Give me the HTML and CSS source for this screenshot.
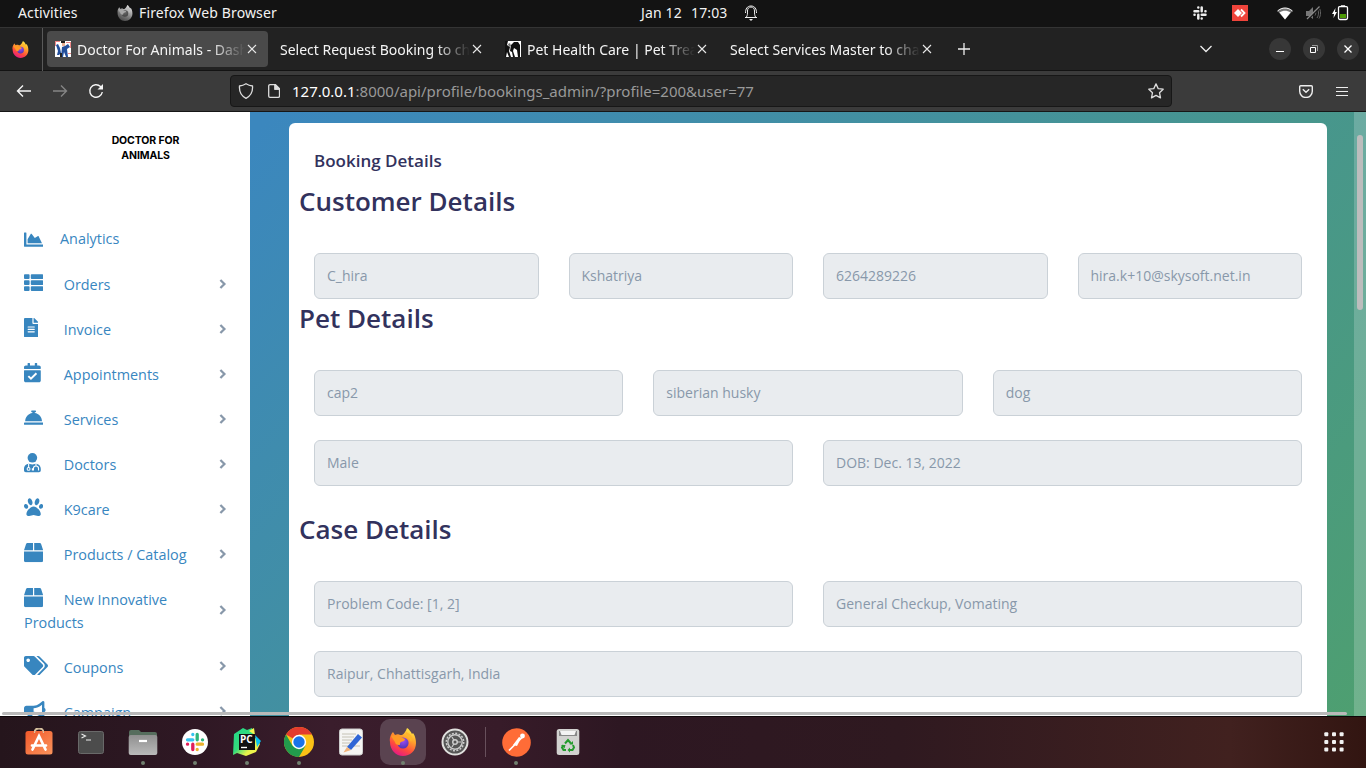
FILE: index.html
```html
<!DOCTYPE html>
<html lang="en">
<head>
<meta charset="utf-8">
<title>Doctor For Animals - Dashboard</title>
<link rel="stylesheet" href="styles.css">
</head>
<body>
<svg class="defs" aria-hidden="true">
  <defs>
    <linearGradient id="flame" x1=".8" y1="0" x2=".3" y2="1"><stop offset="0" stop-color="#fff04a"/><stop offset=".35" stop-color="#ffa52b"/><stop offset=".7" stop-color="#ff4a3d"/><stop offset="1" stop-color="#e3158a"/></linearGradient>
    <radialGradient id="globe" cx=".5" cy=".3" r=".7"><stop offset="0" stop-color="#a04bf5"/><stop offset="1" stop-color="#4b36b5"/></radialGradient>
    <linearGradient id="orange" x1="0" y1="0" x2="1" y2="1"><stop offset="0" stop-color="#f1582a"/><stop offset="1" stop-color="#fa945c"/></linearGradient>
    <linearGradient id="grey" x1="0" y1="0" x2="0" y2="1"><stop offset="0" stop-color="#8f8f8f"/><stop offset="1" stop-color="#bababa"/></linearGradient>
    <linearGradient id="pc" x1="0" y1="0" x2="1" y2="1"><stop offset="0" stop-color="#21d789"/><stop offset=".45" stop-color="#35dc7c"/><stop offset=".7" stop-color="#e7f24b"/><stop offset="1" stop-color="#fcf84a"/></linearGradient>
    <symbol id="firefox" viewBox="0 0 28 28">
      <path fill="url(#flame)" d="M1 14C0 9 3 5 4 4l2 3c2-1 4-1 5 0l2 0c2-1 4-4 5-7 2 1 4 4 5 6l1-1c3 4 3 9 3 10 0 8-6 13-13 13S1 22 1 14z"/>
      <circle cx="14" cy="15" r="5.6" fill="url(#globe)"/>
      <path fill="#ff9a25" d="M2 8c4-2 9 1 14 3 0 2-2 2-4 3-2 1 0 3-2 3s-4-1-4-3z"/>
      <path fill="#ffb52b" d="M17 4c-1 4 4 6 5 10 2-3 1-8-5-10z"/>
    </symbol>
    <symbol id="close" viewBox="0 0 10 10"><path d="M1 1l8 8M9 1L1 9" fill="none" stroke="#e8e8e8" stroke-width="1.1"/></symbol>
    <symbol id="chev" viewBox="0 0 8 12"><path d="M1.4 2l4 4-4 4" fill="none" stroke="#8898aa" stroke-width="2.3"/></symbol>
    <symbol id="box" viewBox="0 0 512 512"><path d="M509.5 184.6L458.9 32.8C452.4 13.2 434.1 0 413.4 0H272v192h238.7c-.4-2.5-.4-5-1.2-7.4zM240 0H98.6c-20.7 0-39 13.2-45.5 32.8L2.5 184.6c-.8 2.4-.8 4.9-1.2 7.4H240V0zM0 224v240c0 26.5 21.5 48 48 48h416c26.5 0 48-21.5 48-48V224H0z"/></symbol>
  </defs>
</svg>

<header class="topbar">
  <span class="activities">Activities</span>
  <svg class="app-ff" width="16" height="16"><use href="#firefox"/></svg>
  <span class="app-name">Firefox Web Browser</span>
  <span class="date">Jan 12</span><span class="time">17:03</span>
  <svg class="bell" width="14" height="16" viewBox="0 0 14 16" fill="none" stroke="#eee"><path d="M1 12.5h12M2.5 12c1-2 1-3 1-6 0-2.5 1.200-4 3.500-4s3.500 1.500 3.500 4c0 3 0 4 1 6M1.500 8c0-4 1.500-7 5.500-7s5.500 3 5.500 7"/><path d="M5 14h4l-2 2z" fill="#eee" stroke="none"/></svg>
  <span class="tray">
    <svg width="14" height="14" viewBox="0 0 14 14" stroke="#eee" stroke-width="2.500" stroke-linecap="round"><path d="M5.300 1.500v.1M1.500 5.300h3.800M8.700 1.500v3.800M12.500 5.300h-.1M8.700 8.700h3.800M8.700 12.500v-.1M5.300 8.700v3.800M1.500 8.700h.1"/></svg>
    <svg class="anydesk" width="16" height="16" viewBox="0 0 16 16"><path fill="#ef443b" d="M0 0h16v16H0z"/><path fill="#fff" d="M2 8l4-4 4 4-4 4z"/><path d="M9 4.500L12.500 8 9 11.500" fill="none" stroke="#fff" stroke-width="1.800"/></svg>
    <svg class="wifi" width="16" height="13" viewBox="0 0 16 13"><path d="M.5 4C5 0 11 0 15.500 4L8 12.500z" fill="#777"/><path d="M.5 4C5 0 11 0 15.500 4" fill="none" stroke="#fff"/><path d="M2.500 5.500C6 3 10 3 13.500 5.500L8 12.500z" fill="#fff"/></svg>
    <svg class="mute" width="15" height="14" viewBox="0 0 15 14"><path fill="#777" d="M0 5h3l4-4v12L3 10H0z"/><path d="M9 4.500c1 1 1 4 0 5M11 3c2 2 2 6 0 9M13 1.500c2 3 2 8 0 11" fill="none" stroke="#666"/><path d="M1.500 14L14 1.500" stroke="#131313" stroke-width="1.500"/><path d="M1 13L13.500.5" stroke="#888" stroke-width="1.300"/></svg>
    <svg width="17" height="16" viewBox="0 0 17 16"><path fill="#fff" d="M3.500 3L0 9h2l-.5 4L5 7H3z"/><path fill="#4e9a06" d="M8 9h6v4H8z"/><path d="M9.500 1.700V1h3v.7M7.500 1.700h7a1 1 0 0 1 1 1V13a1.500 1.500 0 0 1-1.500 1.500H8A1.500 1.500 0 0 1 6.500 13V2.700a1 1 0 0 1 1-1z" fill="none" stroke="#fff" stroke-width="1.300"/></svg>
  </span>
</header>

<div class="tabs">
  <div class="pinned"><svg width="17" height="17"><use href="#firefox"/></svg></div>
  <div class="tab active">
    <svg class="fav" width="16" height="16" viewBox="0 0 16 16"><path fill="#fff" d="M0 0h16v16H0z"/><path fill="#e88" d="M0 0h5v1H1v4H0zM11 1h5v6h-1V2h-4zM13 12h3v1h-3z"/><path fill="#234f9b" d="M1 4l2-1 2 4 1 5-2 2H2l1-4zM7 6l3-1 3-2 2 3-3 2 1 8h-2l-2-5-1 5H6z"/><path fill="#222" d="M6 0h4v2H6zM5 12h2v4H5z"/><path fill="#e9b195" d="M7 2h3v3H7z"/></svg>
    <span class="label">Doctor For Animals - Dashboard</span><svg class="x" width="10" height="10"><use href="#close"/></svg>
  </div>
  <div class="tab"><span class="label">Select Request Booking to change</span><svg class="x" width="10" height="10"><use href="#close"/></svg></div>
  <div class="tab">
    <svg class="fav" width="16" height="16" viewBox="0 0 16 16"><path fill="#fff" d="M0 0h16v16H0z"/><path fill="#111" d="M0 0h3l-1 4 3 2-1 4 2 6H4L2 11l-1 5H0zM6 4l3-3 4 0 2 3 0 12h-2l-1-7-3-2-1 3 2 6H8l-1-5-2-1z"/><path fill="#777" d="M3 3l2-1 1 3-2 1z"/></svg>
    <span class="label">Pet Health Care | Pet Treatment</span><svg class="x" width="10" height="10"><use href="#close"/></svg>
  </div>
  <div class="tab"><span class="label">Select Services Master to change</span><svg class="x" width="10" height="10"><use href="#close"/></svg></div>
  <svg class="plus" width="12" height="12" viewBox="0 0 12 12"><path d="M6 0v12M0 6h12" stroke="#eee" stroke-width="1.300"/></svg>
  <svg class="down" width="12" height="8" viewBox="0 0 12 8"><path d="M.5 1L6 6.500 11.500 1" fill="none" stroke="#eee" stroke-width="1.300"/></svg>
  <span class="win"><svg width="10" height="10" viewBox="0 0 10 10"><path d="M1 7.500h8" stroke="#fff"/></svg></span>
  <span class="win"><svg width="10" height="10" viewBox="0 0 10 10" fill="none"><path d="M1.500 3.500h5v5h-5z" stroke="#fff"/><path d="M3 1.500h5.500V7" stroke="#999"/></svg></span>
  <span class="win"><svg width="10" height="10" viewBox="0 0 10 10"><path d="M1.500 1.500l7 7M8.500 1.500l-7 7" stroke="#fff" stroke-width="1.300"/></svg></span>
</div>

<div class="toolbar">
  <svg width="16" height="14" viewBox="0 0 16 14" fill="none" stroke="#f4f4f4" stroke-width="1.400"><path d="M15 7H1.500M7 1.500L1.500 7 7 12.500"/></svg>
  <svg class="fwd" width="16" height="14" viewBox="0 0 16 14" fill="none" stroke="#858585" stroke-width="1.400"><path d="M1 7h13.500M9 1.500L14.500 7 9 12.500"/></svg>
  <svg class="reload" width="16" height="16" viewBox="0 0 16 16" fill="none"><path d="M14.300 9A6.300 6.300 0 1 1 12.500 3.500l1.500 1.500" stroke="#f4f4f4" stroke-width="1.400"/><path d="M15 1v5.500H9.500z" fill="#f4f4f4"/></svg>
  <div class="url">
    <svg width="16" height="16" viewBox="0 0 16 16" fill="none" stroke="#ddd" stroke-width="1.300"><path d="M8 .8c2 1.300 4 2 6.500 2.200C15 9 12.500 13 8 15.300 3.500 13 1 9 1.500 3 4 2.800 6 2.100 8 .8z"/></svg>
    <svg class="page-i" width="12" height="14" viewBox="0 0 12 14" fill="none" stroke="#ddd" stroke-width="1.300"><path d="M2 .7h5.500l4 4V12a1.300 1.300 0 0 1-1.300 1.300H2A1.300 1.300 0 0 1 .7 12V2A1.300 1.300 0 0 1 2 .7z"/><path d="M7 1v4.200h4.500" /><path d="M7 1v4h4z" fill="#ddd"/></svg>
    <span class="address"><b>127.0.0.1</b>:8000/api/profile/bookings_admin/?profile=200&amp;user=77</span>
    <svg class="star" width="16" height="16" viewBox="0 0 16 16" fill="none" stroke="#ddd" stroke-width="1.300" stroke-linejoin="round"><path d="M8 .9l2.200 4.700 5 .6-3.700 3.500 1 5.200L8 12.400 3.500 14.900l1-5.200L.8 6.200l5-.6z"/></svg>
  </div>
  <svg class="pocket" width="14" height="13" viewBox="0 0 14 13" fill="none" stroke="#eee" stroke-width="1.400"><path d="M1.700.7h10.600a1 1 0 0 1 1 1v4.500a6.300 6.300 0 0 1-12.600 0V1.700a1 1 0 0 1 1-1z"/><path d="M3.800 4.300L7 7.300l3.200-3"/></svg>
  <svg class="menu" width="12" height="11" viewBox="0 0 12 11" stroke="#eee"><path d="M0 1.500h12M0 5.500h12M0 9.500h12" stroke-width="1.100"/></svg>
</div>

<div class="page">
  <aside class="sidebar">
    <div class="brand">DOCTOR FOR<br>ANIMALS</div>
    <nav>
      <a class="item first"><span class="ico"><svg viewBox="0 0 512 512"><path d="M500 384c6.600 0 12 5.400 12 12v40c0 6.600-5.400 12-12 12H12c-6.600 0-12-5.400-12-12V76c0-6.600 5.400-12 12-12h40c6.600 0 12 5.400 12 12v308h436zM372.700 159.500L288 216l-85.300-113.700c-5.100-6.800-15.500-6.300-19.900 1L96 248v104h384l-89.900-187.800c-3.200-6.500-11.400-8.700-17.400-4.700z"/></svg></span>Analytics</a>
      <a class="item"><span class="txt"><span class="ico"><svg viewBox="0 0 512 512"><rect y="32" width="149" height="128" rx="24"/><rect x="181" y="32" width="331" height="128" rx="24"/><rect y="192" width="149" height="128" rx="24"/><rect x="181" y="192" width="331" height="128" rx="24"/><rect y="352" width="149" height="128" rx="24"/><rect x="181" y="352" width="331" height="128" rx="24"/></svg></span> Orders</span><svg class="chev"><use href="#chev"/></svg></a>
      <a class="item"><span class="txt"><span class="ico"><svg viewBox="0 0 384 512"><path d="M224 136V0H24C10.700 0 0 10.700 0 24v464c0 13.300 10.700 24 24 24h336c13.300 0 24-10.700 24-24V160H248c-13.200 0-24-10.800-24-24zm64 236c0 6.600-5.400 12-12 12H108c-6.600 0-12-5.400-12-12v-8c0-6.600 5.400-12 12-12h168c6.600 0 12 5.400 12 12v8zm0-64c0 6.600-5.400 12-12 12H108c-6.600 0-12-5.400-12-12v-8c0-6.600 5.400-12 12-12h168c6.600 0 12 5.400 12 12v8zm0-72v8c0 6.600-5.400 12-12 12H108c-6.600 0-12-5.400-12-12v-8c0-6.600 5.400-12 12-12h168c6.600 0 12 5.400 12 12zm96-114.100v6.100H256V0h6.100c6.400 0 12.500 2.500 17 7l97.900 98c4.500 4.500 7 10.600 7 16.900z"/></svg></span> Invoice</span><svg class="chev"><use href="#chev"/></svg></a>
      <a class="item"><span class="txt"><span class="ico"><svg viewBox="0 0 448 512"><path d="M436 160H12c-6.627 0-12-5.373-12-12v-36c0-26.510 21.490-48 48-48h48V12c0-6.627 5.373-12 12-12h40c6.627 0 12 5.373 12 12v52h128V12c0-6.627 5.373-12 12-12h40c6.627 0 12 5.373 12 12v52h48c26.510 0 48 21.490 48 48v36c0 6.627-5.373 12-12 12zM12 192h424c6.627 0 12 5.373 12 12v260c0 26.510-21.490 48-48 48H48c-26.510 0-48-21.490-48-48V204c0-6.627 5.373-12 12-12z"/><path d="M116 350l70 70 146-146" fill="none" stroke="#fff" stroke-width="52"/></svg></span> Appointments</span><svg class="chev"><use href="#chev"/></svg></a>
      <a class="item"><span class="txt"><span class="ico"><svg viewBox="0 0 512 512"><path d="M288 130.540V112h16c8.840 0 16-7.160 16-16V80c0-8.840-7.160-16-16-16h-96c-8.840 0-16 7.160-16 16v16c0 8.840 7.160 16 16 16h16v18.540C115.490 146.110 32 239.180 32 352h448c0-112.820-83.490-205.890-192-221.460zM496 384H16c-8.840 0-16 7.160-16 16v32c0 8.840 7.160 16 16 16h480c8.840 0 16-7.160 16-16v-32c0-8.840-7.160-16-16-16z"/></svg></span> Services</span><svg class="chev"><use href="#chev"/></svg></a>
      <a class="item"><span class="txt"><span class="ico"><svg viewBox="0 0 448 512"><circle cx="224" cy="128" r="128"/><path d="M128 290c-75 4-128 64-128 134v40a48 48 0 0 0 48 48h352a48 48 0 0 0 48-48v-40c0-70-53-130-128-134l-96 20z"/><path d="M124 286v105M320 286v60M252 466v-50c0-90 136-90 136 0v50M224 466v-60" fill="none" stroke="#fff" stroke-width="30"/><circle cx="122" cy="424" r="38" fill="none" stroke="#fff" stroke-width="28"/></svg></span> Doctors</span><svg class="chev"><use href="#chev"/></svg></a>
      <a class="item"><span class="txt"><span class="ico"><svg viewBox="0 0 512 512"><path d="M256 224c-79.410 0-192 122.760-192 200.250 0 34.900 26.810 55.750 71.740 55.750 48.840 0 81.090-25.080 120.260-25.080 39.510 0 71.850 25.080 120.260 25.080 44.930 0 71.740-20.850 71.740-55.750C448 346.760 335.410 224 256 224zm-147.280-12.610c-10.400-34.650-42.440-57.090-71.560-50.130-29.120 6.960-44.290 40.690-33.890 75.340 10.400 34.650 42.440 57.090 71.560 50.130 29.120-6.960 44.290-40.690 33.890-75.340zm84.720-20.780c30.940-8.140 42.930-55.150 26.780-104.990s-54.330-83.660-85.270-75.520c-30.940 8.140-42.930 55.150-26.780 104.990s54.320 83.660 85.270 75.520zm281.390-29.340c-29.120-6.960-61.150 15.480-71.560 50.130-10.400 34.650 4.770 68.380 33.890 75.340 29.120 6.960 61.150-15.480 71.560-50.130 10.400-34.650-4.770-68.380-33.890-75.340zm-156.270 29.340c30.940 8.140 69.120-25.680 85.270-75.520 16.150-49.840 4.160-96.850-26.780-104.990s-69.120 25.680-85.270 75.520c-16.150 49.840-4.160 96.850 26.780 104.990z"/></svg></span> K9care</span><svg class="chev"><use href="#chev"/></svg></a>
      <a class="item"><span class="txt"><span class="ico"><svg viewBox="0 0 512 512"><use href="#box"/></svg></span> Products / Catalog</span><svg class="chev"><use href="#chev"/></svg></a>
      <a class="item"><span class="txt"><span class="ico"><svg viewBox="0 0 512 512"><use href="#box"/></svg></span> New Innovative<br>Products</span><svg class="chev"><use href="#chev"/></svg></a>
      <a class="item"><span class="txt"><span class="ico"><svg viewBox="0 0 640 512"><path d="M497.941 225.941L286.059 14.059A48 48 0 0 0 252.118 0H48C21.490 0 0 21.490 0 48v204.118a48 48 0 0 0 14.059 33.941l211.882 211.882c18.744 18.745 49.136 18.746 67.882 0l204.118-204.118c18.745-18.745 18.745-49.137 0-67.882zM112 160c-26.510 0-48-21.490-48-48s21.490-48 48-48 48 21.490 48 48-21.490 48-48 48zm513.941 133.823L421.823 497.941c-18.745 18.745-49.137 18.745-67.882 0l-.36-.36L527.640 323.522c16.999-16.999 26.362-39.600 26.362-63.640s-9.362-46.641-26.362-63.640L331.397 0h48.721a48 48 0 0 1 33.941 14.059l211.882 211.882c18.745 18.745 18.745 49.137 0 67.882z"/></svg></span> Coupons</span><svg class="chev"><use href="#chev"/></svg></a>
      <a class="item"><span class="txt"><span class="ico"><svg viewBox="0 0 576 512"><path d="M576 240c0-23.630-12.950-44.040-32-55.120V32.010C544 23.260 537.020 0 512 0c-7.120 0-14.190 2.380-19.980 7.020l-85.030 68.030C364.280 109.190 310.660 128 256 128H64c-35.350 0-64 28.650-64 64v96c0 35.350 28.650 64 64 64h33.700c-1.390 10.480-2.180 21.140-2.180 32 0 39.770 9.260 77.350 25.560 110.940 5.190 10.690 16.520 17.060 28.400 17.060h74.280c26.050 0 41.690-29.840 25.900-50.560-16.400-21.520-26.150-48.360-26.150-77.440 0-11.110 1.620-21.790 4.410-32H256c54.660 0 108.280 18.810 150.980 52.950l85.030 68.030a32.023 32.023 0 0 0 19.980 7.020c24.920 0 32-22.780 32-32V295.130C563.050 284.040 576 263.630 576 240zm-96 141.420l-33.050-26.440C392.950 311.780 325.120 288 256 288v-96c69.120 0 136.950-23.780 190.950-66.980L480 98.580v282.840z"/></svg></span> Campaign</span><svg class="chev"><use href="#chev"/></svg></a>
    </nav>
  </aside>
  <main class="main">
    <section class="card">
      <h3 class="title">Booking Details</h3>
      <h2>Customer Details</h2>
      <div class="row four"><div class="field">C_hira</div><div class="field">Kshatriya</div><div class="field">6264289226</div><div class="field">hira.k+10@skysoft.net.in</div></div>
      <h2 class="pet">Pet Details</h2>
      <div class="row three"><div class="field">cap2</div><div class="field">siberian husky</div><div class="field">dog</div></div>
      <div class="row two next"><div class="field">Male</div><div class="field">DOB: Dec. 13, 2022</div></div>
      <h2 class="case">Case Details</h2>
      <div class="row two"><div class="field">Problem Code: [1, 2]</div><div class="field">General Checkup, Vomating</div></div>
      <div class="row next"><div class="field">Raipur, Chhattisgarh, India</div></div>
    </section>
  </main>
  <div class="vtrack"><div class="vthumb"></div></div>
  <div class="hthumb"></div>
</div>

<footer class="dock">
  <div class="app"><svg width="28" height="28" viewBox="0 0 28 28"><path d="M9.500 5V3.500a4.500 3.500 0 0 1 9 0V5" fill="none" stroke="#d8c3a0" stroke-width="1.400"/><rect x=".5" y="3" width="27" height="23.500" rx="2.500" fill="url(#orange)"/><path d="M9.500 5v-.5a4.500 3.500 0 0 1 9 0V5" fill="none" stroke="#d8c3a0" stroke-width="1.200"/><path d="M7.500 21.500L14 8l6.500 13.500M7 17.500h14" fill="none" stroke="#fff" stroke-width="2.700" stroke-linecap="round"/></svg></div>
  <div class="app"><svg width="28" height="28" viewBox="0 0 28 28"><rect x="1.500" y="3.500" width="25" height="22" rx="2" fill="#4c4c4c" stroke="#696969"/><path d="M4.500 6l4 2-4 2M9 12h5" fill="none" stroke="#eee" stroke-width="1.100"/></svg></div>
  <div class="app run"><svg width="30" height="28" viewBox="0 0 30 28"><path fill="#566d5d" d="M1 4a2 2 0 0 1 2-2h8l2 2h14a2 2 0 0 1 2 2v7H1z"/><rect x=".7" y="7" width="28.600" height="20" rx="2" fill="url(#grey)"/><path d="M11 13h8" stroke="#fff" stroke-width="2.200"/></svg></div>
  <div class="app run"><svg width="28" height="28" viewBox="0 0 28 28"><circle cx="14" cy="14" r="13" fill="#fff"/><g stroke-width="3.300" stroke-linecap="round"><path stroke="#36c5f0" d="M11.800 6.500v.1M6.500 11.800h5.300"/><path stroke="#2eb67d" d="M16.200 6.500v5.300M21.500 11.800h.1"/><path stroke="#ecb22e" d="M16.200 16.200h5.300M16.200 21.500v.1"/><path stroke="#e01e5a" d="M11.800 16.200v5.300M6.500 16.200h.1"/></g></svg></div>
  <div class="app run"><svg width="28" height="28" viewBox="0 0 28 28"><path fill="url(#pc)" d="M1 6L10 0l4 2 5-2 2 8 6 8-4 8-10 4-9-3-4 2z"/><path fill="#07c3f2" d="M22 7l6 6-4 6z"/><path fill="#f4f850" d="M16 3l5-3 1 7z"/><path fill="#111" d="M6 6h16v16H6z"/><path d="M8 19.500h6" stroke="#fff" stroke-width="1.400"/><text x="7" y="14.500" class="pctext">PC</text></svg></div>
  <div class="app run"><svg width="30" height="30" viewBox="0 0 30 30"><circle cx="15" cy="15" r="15" fill="#fbc116"/><path fill="#e33b2e" d="M15 15L2 7.500A15 15 0 0 1 28 7.500H15z"/><path fill="#229b4c" d="M2 7.500A15 15 0 0 0 15 30l6.500-11.300L15 15 8.500 18.700z"/><circle cx="15" cy="15" r="7.200" fill="#fff"/><circle cx="15" cy="15" r="5.700" fill="#1a73e8"/></svg></div>
  <div class="app"><svg width="26" height="28" viewBox="0 0 26 28"><rect x="1.500" y="1" width="23" height="26" rx="2.500" fill="#f5f5f3" stroke="#ccc"/><path d="M4 6h14M4 9h12M4 12h10M4 15h8M4 18h18" stroke="#c5c2b5"/><path d="M9 19L20 6l4 3.500L13 22z" fill="#2f66d6"/><path d="M9 19l4 3-7.500 2.500z" fill="#f0b27a"/></svg></div>
  <div class="app run focused"><svg width="28" height="28"><use href="#firefox"/></svg></div>
  <div class="app"><svg width="28" height="28" viewBox="0 0 28 28"><circle cx="14" cy="14" r="12.500" fill="#565656" stroke="#e0e0de" stroke-width="2"/><circle cx="14" cy="14" r="8.700" fill="none" stroke="#ccc" stroke-width="1.500" stroke-dasharray="2 1.415"/><circle cx="14" cy="14" r="7.200" fill="none" stroke="#ccc" stroke-width="1.400"/><path d="M14 14h6M14 14l-3-5M14 14l-3 5" stroke="#ccc" stroke-width="1.200"/><circle cx="14" cy="14" r="3" fill="#ccc"/><circle cx="14" cy="14" r="1.500" fill="#565656"/></svg></div>
  <div class="sep"></div>
  <div class="app run"><svg width="29" height="29" viewBox="0 0 29 29"><circle cx="14.500" cy="14.500" r="14.300" fill="#ff6c37"/><path d="M7 22.500l6-6 7-7" stroke="#fff" stroke-width="1.700"/><path d="M11 17l6-8 2 1-4 8z" fill="#fff"/><circle cx="20.500" cy="8" r="2.400" fill="#fff"/></svg></div>
  <div class="app"><svg width="24" height="28" viewBox="0 0 24 28"><rect x=".7" y="1" width="22.600" height="26" rx="2.500" fill="#d2d2d0"/><path fill="#888" d="M3 3h18v5H3z"/><path fill="#f4f4f4" d="M4 3h16l-1.500 4h-13z"/><path d="M9 15.500l3-3.500 3 3.500M17 17l1 2.500-1.500 2.500h-3M10 22H7.500L6 19.500 7.500 17" fill="none" stroke="#249b2d" stroke-width="2"/><path fill="#249b2d" d="M13.500 16.500h3.500V13zM14 19.500L11.500 22l2.500 2.500zM5 17h4.500l-1 3.500z"/></svg></div>
  <svg class="grid" width="20" height="20" viewBox="0 0 20 20" fill="#f2f2f2"><rect x=".3" y=".3" width="4" height="4" rx="1"/><rect x="8" y=".3" width="4" height="4" rx="1"/><rect x="15.600" y=".3" width="4" height="4" rx="1"/><rect x=".3" y="8" width="4" height="4" rx="1"/><rect x="8" y="8" width="4" height="4" rx="1"/><rect x="15.600" y="8" width="4" height="4" rx="1"/><rect x=".3" y="15.600" width="4" height="4" rx="1"/><rect x="8" y="15.600" width="4" height="4" rx="1"/><rect x="15.600" y="15.600" width="4" height="4" rx="1"/></svg>
</footer>
</body>
</html>
```
FILE: styles.css
```css
* { box-sizing: border-box; }
body {
  margin: 0;
  width: 1366px;
  height: 768px;
  overflow: hidden;
  display: flex;
  flex-direction: column;
  font-family: "Open Sans", sans-serif;
}
svg { display: block; flex: none; }
.defs { position: absolute; width: 0; height: 0; }

/* desktop top bar */
.topbar {
  height: 27px;
  flex: none;
  display: flex;
  align-items: center;
  padding: 0 0 1px 18px;
  background: #131313;
  color: #f2f2f2;
  font: 14px/26px "Noto Sans", sans-serif;
  letter-spacing: .13px;
  white-space: pre;
}
.activities { width: 99px; }
.app-ff { filter: grayscale(1); }
.app-name { width: 502px; margin-left: 6px; }
.date { width: 50px; }
.time { width: 53px; }
.tray { display: flex; align-items: center; margin-left: 435px; }
.anydesk { margin-left: 25px; }
.wifi { margin-left: 29px; }
.mute { margin: 0 11px 0 13px; }

/* browser tabs */
.tabs {
  height: 44px;
  flex: none;
  display: flex;
  align-items: center;
  background: #222;
  border-top: 1px solid #343434;
  border-bottom: 1px solid #131313;
  font: 14px/20px "Noto Sans", sans-serif;
  color: #f4f4f4;
}
.pinned {
  width: 43px;
  height: 43px;
  flex: none;
  padding: 13px 0 0 12px;
  border-right: 1px solid #5a5a5a;
  margin-right: 4px;
}
.tab {
  display: flex;
  align-items: center;
  flex: none;
  width: 221px;
  height: 36px;
  margin-right: 4px;
  padding: 0 11px 0 8px;
  border-radius: 4px;
}
.tab.active { background: #4a4a4a; }
.fav { margin-right: 6px; }
.label {
  flex: 1;
  min-width: 0;
  padding-top: 1px;
  overflow: hidden;
  white-space: nowrap;
  -webkit-mask-image: linear-gradient(to left, transparent, #000 34px);
  mask-image: linear-gradient(to left, transparent, #000 34px);
}
.x { margin-left: 2px; }
.plus { margin-left: 11px; }
.down { margin: 0 57px 0 230px; }
.win {
  width: 22px;
  height: 22px;
  flex: none;
  margin-right: 12px;
  display: grid;
  place-items: center;
  border-radius: 50%;
  background: #373737;
}

/* navigation bar */
.toolbar {
  height: 41px;
  flex: none;
  display: flex;
  align-items: center;
  padding-left: 16px;
  background: #3b3b3b;
  border-bottom: 1px solid #161616;
}
.fwd { margin-left: 20px; }
.reload { margin-left: 20px; }
.url {
  width: 942px;
  height: 32px;
  margin-left: 126px;
  padding: 0 7px;
  display: flex;
  align-items: center;
  border: 1px solid #171717;
  border-radius: 4px;
  background: #262626;
}
.page-i { margin: 0 12px 0 14px; }
.address {
  flex: 1;
  padding-bottom: 1px;
  font: 15px/20px "Noto Sans", sans-serif;
  color: #999;
  white-space: nowrap;
}
.address b { font-weight: 400; color: #fff; }
.pocket { margin-left: 127px; }
.menu { margin-left: 23px; }

/* web page */
.page {
  position: relative;
  height: 604px;
  flex: none;
  display: flex;
  overflow: hidden;
  background: linear-gradient(135deg, #3b87be 14%, #44929a 52%, #4e9f70 100%);
}
.sidebar { width: 250px; flex: none; background: #fff; color: #3886bf; }
.brand {
  height: 104px;
  padding: 21px 0 0 41px;
  text-align: center;
  font: 700 10.5px/15px Inter, sans-serif;
  letter-spacing: -.1px;
  color: #000;
}
.item {
  display: flex;
  align-items: center;
  padding: 10.97px 0 10.97px 24px;
  font-size: 14.4px;
  line-height: 22.3px;
}
.item.first { height: 46.3px; }
.txt { width: 188px; }
.ico { display: inline-block; width: 36px; height: 19.2px; vertical-align: -2.4px; }
.ico svg { height: 19.2px; fill: #3886bf; }
.chev { width: 8px; height: 12px; margin: -2px 0 0 6.6px; }

.main { flex: 1; padding: 11px 39px 0; }
.card {
  width: 1038px;
  height: 620px;
  padding: 0 25px;
  border-radius: 6px;
  background: #fff;
}
h2, h3 { margin: 0; color: #32325d; font-weight: 600; }
.title { padding-top: 26px; font-size: 17px; line-height: 24px; }
h2 { height: 80px; padding-top: 10px; margin-left: -15px; font-size: 26px; line-height: 36px; }
h2.pet { height: 71px; padding-top: 1px; }
h2.case { height: 95px; padding-top: 25px; }
.row { display: grid; gap: 30px; }
.four { grid-template-columns: repeat(4, 1fr); }
.three { grid-template-columns: repeat(3, 1fr); }
.two { grid-template-columns: repeat(2, 1fr); }
.next { margin-top: 24px; }
.field {
  height: 46px;
  padding: 0 12px;
  border: 1px solid #cad1d7;
  border-radius: 6px;
  background: #e9ecef;
  color: #8898aa;
  font-size: 14px;
  line-height: 44px;
}

/* overlay scrollbars */
.vtrack {
  position: absolute;
  top: 0;
  right: 0;
  width: 12px;
  height: 100%;
  padding: 23px 3px 0;
  background: rgba(255, 255, 255, .2);
}
.vthumb { height: 175px; border-radius: 3px; background: #bdbdbd; }
.hthumb {
  position: absolute;
  left: 2px;
  bottom: 1px;
  width: 1345px;
  height: 3px;
  border-radius: 2px;
  background: #b9b9b9;
}

/* dock */
.dock {
  height: 52px;
  flex: none;
  display: flex;
  align-items: center;
  padding: 0 0 1px 13px;
  border-top: 1px solid #0d0508;
  background: linear-gradient(90deg, #25151c 0, #2f1824 200px, #3a1d2c 330px, #371b29 500px, #2d1722 620px, #2f1920 900px, #41211f 1230px, #321511 1366px);
}
.app {
  position: relative;
  width: 46px;
  height: 46px;
  margin: 0 3px;
  display: grid;
  place-items: center;
  border-radius: 10px;
}
.app.run::after {
  content: "";
  position: absolute;
  left: 21px;
  bottom: 0;
  width: 4px;
  height: 4px;
  border-radius: 50%;
  background: #71806f;
}
.focused { background: #5a4350; }
.sep { width: 1px; height: 30px; margin: 0 4px; background: #68505c; }
.pctext { font: 700 10px "Open Sans", sans-serif; fill: #fff; }
.grid { margin-left: 730px; }
```
